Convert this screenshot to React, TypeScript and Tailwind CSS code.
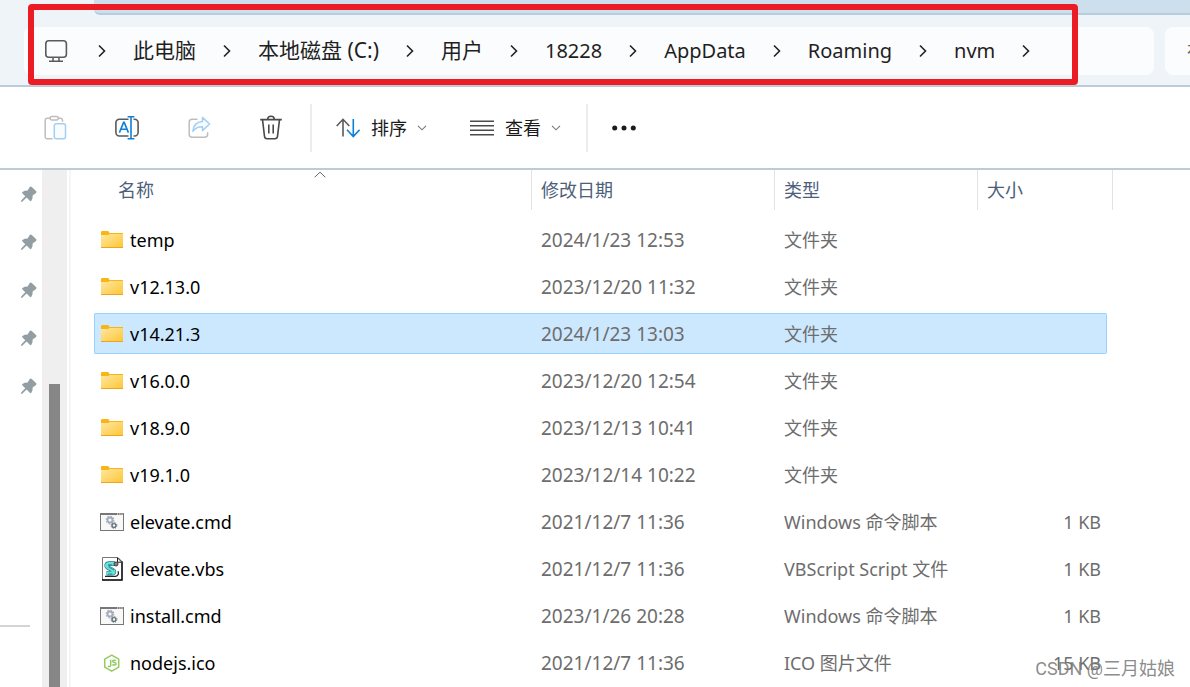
import React from "react";

type FileKind = "folder" | "cmd" | "vbs" | "node";

interface FileEntry {
  name: string;
  date: string;
  type: string;
  size?: string;
  kind: FileKind;
  selected?: boolean;
}

const crumbs = [
  { label: "此电脑", size: "text-[21px]" },
  { label: "本地磁盘 (C:)", size: "text-[21px]" },
  { label: "用户", size: "text-[21px]" },
  { label: "18228", size: "text-[20px]" },
  { label: "AppData", size: "text-[20px]" },
  { label: "Roaming", size: "text-[20px]" },
  { label: "nvm", size: "text-[20px]" },
];

const files: FileEntry[] = [
  { name: "temp", date: "2024/1/23 12:53", type: "文件夹", kind: "folder" },
  { name: "v12.13.0", date: "2023/12/20 11:32", type: "文件夹", kind: "folder" },
  { name: "v14.21.3", date: "2024/1/23 13:03", type: "文件夹", kind: "folder", selected: true },
  { name: "v16.0.0", date: "2023/12/20 12:54", type: "文件夹", kind: "folder" },
  { name: "v18.9.0", date: "2023/12/13 10:41", type: "文件夹", kind: "folder" },
  { name: "v19.1.0", date: "2023/12/14 10:22", type: "文件夹", kind: "folder" },
  { name: "elevate.cmd", date: "2021/12/7 11:36", type: "Windows 命令脚本", size: "1 KB", kind: "cmd" },
  { name: "elevate.vbs", date: "2021/12/7 11:36", type: "VBScript Script 文件", size: "1 KB", kind: "vbs" },
  { name: "install.cmd", date: "2023/1/26 20:28", type: "Windows 命令脚本", size: "1 KB", kind: "cmd" },
  { name: "nodejs.ico", date: "2021/12/7 11:36", type: "ICO 图片文件", size: "15 KB", kind: "node" },
];

function MonitorIcon() {
  return (
    <svg width="28" height="24" viewBox="0 0 28 24" fill="none" stroke="#5a5a5a" strokeWidth="1.6" className="shrink-0">
      <rect x="2.8" y="1.8" width="20.6" height="16.4" rx="3" />
      <path d="M10 18.2v3.6M16 18.2v3.6M6 22.2h14" strokeWidth="1.5" />
    </svg>
  );
}

function CrumbChevron() {
  return (
    <svg width="8" height="14" viewBox="0 0 8 14" fill="none" stroke="#222" strokeWidth="1.6" className="shrink-0">
      <path d="M1 1.5 6.5 7 1 12.5" />
    </svg>
  );
}

function PasteIcon() {
  return (
    <svg width="24" height="26" viewBox="0 0 24 26" fill="none" strokeWidth="1.5">
      <path d="M7.5 3.2H4.2A2 2 0 0 0 2.2 5.2v16.6a2 2 0 0 0 2 2h5.3M15.5 3.2h2a2 2 0 0 1 2 2v1.6" stroke="#bdbdbd" />
      <rect x="7" y="1.5" width="8.4" height="3.4" rx="1.7" stroke="#bdbdbd" />
      <rect x="11.3" y="8.8" width="11.2" height="15" rx="2" stroke="#a3cff2" fill="#f8fcff" />
    </svg>
  );
}

function RenameIcon() {
  return (
    <svg width="24" height="26" viewBox="0 0 24 26" fill="none" strokeWidth="1.6">
      <path d="M13.5 4.2H4.3A3.4 3.4 0 0 0 .9 7.6v10a3.4 3.4 0 0 0 3.4 3.4h9.2M18.5 4.2h1.2a3.4 3.4 0 0 1 3.4 3.4v10a3.4 3.4 0 0 1-3.4 3.4h-1.2" stroke="#5a5a5a" />
      <path d="M4.4 17.6 8.6 7.4h.6l4.2 10.2M5.8 14.3h6.2M12.6 1.8h6.8M12.6 23.8h6.8M16 1.8v22" stroke="#0f7fd8" />
    </svg>
  );
}

function ShareIcon() {
  return (
    <svg width="24" height="26" viewBox="0 0 24 26" fill="none" strokeWidth="1.5" strokeLinejoin="round">
      <path d="M10.5 4.2H5.2a3 3 0 0 0-3 3v12a3 3 0 0 0 3 3h12.4a3 3 0 0 0 3-3v-2" stroke="#bdbdbd" />
      <path d="M15.5 2.4 22.6 9l-7.1 6.6v-3.9c-4-.2-6.9 1-9.6 4.6.4-5.4 3.6-9.4 9.6-9.9z" stroke="#a3cff2" fill="#f8fcff" />
    </svg>
  );
}

function TrashIcon() {
  return (
    <svg width="24" height="26" viewBox="0 0 24 26" fill="none" stroke="#4a4a4a" strokeWidth="1.6">
      <path d="M1.2 4.6h21.6M8.7 4.6a3.3 3.3 0 0 1 6.6 0M3.5 4.6l2 16.8a2.6 2.6 0 0 0 2.6 2.3h7.8a2.6 2.6 0 0 0 2.6-2.3l2-16.8" />
      <path d="M9.8 9.4v9M14.2 9.4v9" />
    </svg>
  );
}

function SortIcon() {
  return (
    <svg width="24" height="24" viewBox="0 0 24 24" fill="none" strokeWidth="1.6">
      <path d="M7 20.5V3.5M.7 10 7 3.3l6.3 6.7" stroke="#5a5a5a" />
      <path d="M17.3 3v17.4M11 13.8l6.3 6.7 6.3-6.7" stroke="#0f7fd8" />
    </svg>
  );
}

function ViewIcon() {
  return (
    <svg width="24" height="24" viewBox="0 0 24 24" fill="none" stroke="#4a4a4a" strokeWidth="1.4">
      <path d="M0 5.2h24M0 9.7h24M0 14.2h24M0 18.7h24" />
    </svg>
  );
}

function DownChevron() {
  return (
    <svg width="10" height="6" viewBox="0 0 10 6" fill="none" stroke="#777" strokeWidth="1.1">
      <path d="m1 .8 4 4 4-4" />
    </svg>
  );
}

function PinIcon() {
  return (
    <svg width="16" height="16" viewBox="0 0 16 16" fill="#929da4">
      <path d="M8.7 1Q9.8.1 10.8.9L15 5.1Q16 6.2 15 7L11.6 9.5Q12.2 12.5 10.3 14.8 9.6 15.5 8.8 14.8L5.6 11.6 1.5 15.6 0 15.9.2 14.4 4.3 10.3 1.2 7.2Q.7 6.4 1.5 5.9 4 4.3 6.7 4.5z" />
    </svg>
  );
}

function FolderIcon() {
  return (
    <svg width="24" height="24" viewBox="0 0 24 24">
      <defs>
        <linearGradient id="folder" x1="0" y1="0" x2="1" y2="1">
          <stop offset="0" stopColor="#ffe7a0" />
          <stop offset="1" stopColor="#fdc637" />
        </linearGradient>
      </defs>
      <path d="M1 4.2Q1 3 2.2 3h5.6q.8 0 1.2 1l.4 1H23v4H1z" fill="#f8b616" />
      <path d="M1 7h7.5l1-1H23v13.5H1z" fill="url(#folder)" />
      <path d="M1 19h22v1H1z" fill="#e8a71d" />
    </svg>
  );
}

function CmdIcon() {
  return (
    <svg width="24" height="24" viewBox="0 0 24 24" fill="none">
      <rect x=".5" y="3.5" width="23" height="17" fill="#f8f8f8" stroke="#777" />
      <path d="M0 4h24" stroke="#777" strokeWidth="2" />
      <path d="M17 4h1.2M19.2 4h1.2M21.4 4h1.2" stroke="#fff" />
      <circle cx="10" cy="10" r="2.5" stroke="#a3adb8" strokeWidth="1.8" />
      <circle cx="10" cy="10" r="3.8" stroke="#a3adb8" strokeWidth="1.2" strokeDasharray="1.5 1.48" />
      <circle cx="14" cy="15.5" r="1.9" stroke="#66737c" strokeWidth="1.4" />
      <circle cx="14" cy="15.5" r="2.9" stroke="#66737c" strokeDasharray="1.2 1.08" />
    </svg>
  );
}

function VbsIcon() {
  return (
    <svg width="24" height="24" viewBox="0 0 24 24" fill="none">
      <path d="M2.5.5H18l4 4V23H2.5z" fill="#fff" stroke="#777" />
      <path d="M22 4.5V23H2" stroke="#111" strokeWidth="1.5" />
      <path d="M17.5.8v4.4h4.3z" fill="#fff" stroke="#222" />
      <path d="M15 6.5H9.2c-3.200 0-3.400 2.900-1 4.200l4.500 2.500c2.200 1.200 1.300 3-.6 3H6.500" stroke="#167b80" strokeWidth="4.4" />
      <path d="M15 6.500H9.200c-3.200 0-3.400 2.900-1 4.200l4.500 2.500c2.200 1.200 1.300 3-.6 3H6.500" stroke="#6fdedb" strokeWidth="3.200" />
      <path d="M8 7.800h4M8.500 10l5.500 3M8 17h4" stroke="#167b80" strokeWidth=".8" />
      <circle cx="16" cy="7" r="2" fill="#888" stroke="#222" strokeWidth=".8" />
      <path d="M5 19.300h10.500c2.800-.6 3.500-2.800 2.500-5" stroke="#1b2c2d" strokeWidth="1.300" />
    </svg>
  );
}

function NodeIcon() {
  return (
    <svg width="24" height="24" viewBox="0 0 24 24" fill="none" stroke="#93cb63" strokeWidth="1.5" strokeLinejoin="round">
      <path d="m11.700 4.200 7 4v8l-7 4-7-4v-8z" />
      <path d="M10.700 8.800v5.700q0 1.500-2.800.700M16 9.700c-1.800-.900-3.400-.500-3.300.700.100 1.500 3.400.7 3.400 2.500 0 1.400-2.300 1.500-3.700.6" />
    </svg>
  );
}

const fileIcons: Record<FileKind, React.ReactNode> = {
  folder: <FolderIcon />,
  cmd: <CmdIcon />,
  vbs: <VbsIcon />,
  node: <NodeIcon />,
};

function AddressBar() {
  return (
    <header className="relative bg-[#eff4f9] border-b-2 border-[#bccbd8] overflow-hidden">
      {/* Tab strip */}
      <div className="ml-[94px] h-[15px] bg-[#cddeec] border-b-2 border-[#b9ccdc] rounded-bl-md" />
      <div className="flex gap-[11px] pl-6 pt-3 pb-[10px]">
        <nav aria-label="地址栏" className="flex-1 min-w-0 h-12 rounded-lg bg-[#fbfcfe] pl-[19px] overflow-hidden">
          <ol className="flex items-center h-full gap-[27px] text-[#1f1f1f] whitespace-nowrap">
            <li className="flex items-center gap-[27px]">
              <MonitorIcon />
              <CrumbChevron />
            </li>
            {crumbs.map((crumb) => (
              <li key={crumb.label} className="flex items-center gap-[27px]">
                <a href="#" className={crumb.size}>
                  {crumb.label}
                </a>
                <CrumbChevron />
              </li>
            ))}
          </ol>
        </nav>
        <div className="w-[25px] h-12 rounded-l-lg bg-[#fbfcfe] overflow-hidden">
          <input
            type="search"
            aria-label="搜索"
            placeholder="在 nvm 中搜索"
            className="w-60 h-full pl-[22px] text-lg bg-transparent outline-none placeholder:text-[#666]"
          />
        </div>
      </div>
      {/* Highlight frame */}
      <div className="absolute left-7 right-28 top-1 bottom-0 border-6 border-[#ec1c24] rounded-sm pointer-events-none" />
    </header>
  );
}

function Toolbar() {
  return (
    <div className="flex items-center h-[83px] pl-[43px] bg-white border-b-2 border-[#bccbd8] text-lg text-[#1a1a1a]">
      <div className="flex items-center gap-12">
        <button aria-label="粘贴"><PasteIcon /></button>
        <button aria-label="重命名"><RenameIcon /></button>
        <button aria-label="共享"><ShareIcon /></button>
        <button aria-label="删除"><TrashIcon /></button>
      </div>
      <div className="w-[2px] h-12 ml-[27px] mr-6 bg-[#ececec]" />
      <div className="flex items-center gap-[43px]">
        <button className="flex items-center">
          <SortIcon />
          <span className="ml-[11px] mr-[10px]">排序</span>
          <DownChevron />
        </button>
        <button className="flex items-center">
          <ViewIcon />
          <span className="ml-[11px] mr-[10px]">查看</span>
          <DownChevron />
        </button>
      </div>
      <div className="w-[2px] h-12 ml-[25px] mr-6 bg-[#ececec]" />
      <button aria-label="更多">
        <svg width="24" height="6" viewBox="0 0 24 6" fill="#1a1a1a">
          <circle cx="2.7" cy="3" r="2.5" />
          <circle cx="12" cy="3" r="2.5" />
          <circle cx="21.3" cy="3" r="2.5" />
        </svg>
      </button>
    </div>
  );
}

function Sidebar() {
  return (
    <aside className="flex shrink-0">
      <div className="w-[42px]">
        {[1, 2, 3, 4, 5].map((n) => (
          <div key={n} className="flex items-center h-12 pl-[21px]">
            <PinIcon />
          </div>
        ))}
        <div className="w-[30px] h-[2px] mt-[215px] bg-[#d4d4d4]" />
      </div>
      <div className="flex w-[25px] bg-[#efefef] pl-[7px]">
        <div className="w-[11px] mt-[214px] bg-[#868686]" />
      </div>
      <div className="w-1 border-r-2 border-[#f5f5f5]" />
    </aside>
  );
}

function FileRow({ file }: { file: FileEntry }) {
  const cell = file.selected
    ? "flex items-center h-[41px] leading-7 bg-[#cce8ff] border-y border-[#99d1ff]"
    : "flex items-center h-[41px] leading-7 border-y border-transparent";

  return (
    <tr className="h-[47px]">
      <td className="p-0">
        <div className={`${cell} border-l rounded-l-xs pl-[5px] gap-[6px] text-black`}>
          {fileIcons[file.kind]}
          {file.name}
        </div>
      </td>
      <td className="p-0">
        <div className={`${cell} pl-[9px] text-[19px]`}>{file.date}</div>
      </td>
      <td className="p-0">
        <div className={`${cell} pl-[9px]`}>{file.type}</div>
      </td>
      <td className="p-0">
        <div className={`${cell} border-r rounded-r-xs justify-end mr-[6px] pr-[5px]`}>{file.size}</div>
      </td>
    </tr>
  );
}

function FileTable() {
  const head = "flex items-center h-10 border-r border-[#e3e3e3]";

  return (
    <main className="flex-1 min-w-0 pl-[23px] pr-[77px]">
      <table className="w-full table-fixed text-lg text-[#6d6d6d] whitespace-nowrap">
        <thead>
          <tr className="h-[46px] text-[#4c607a] align-top">
            <th className="p-0 font-normal">
              <div className={`${head} relative ml-[14px] pl-[10px]`}>
                名称
                <svg width="12" height="7" viewBox="0 0 12 7" fill="none" stroke="#666" className="absolute top-px left-1/2 -translate-x-1/2">
                  <path d="m.7 6.2 5.3-5 5.3 5" />
                </svg>
              </div>
            </th>
            <th className="w-[243px] p-0 font-normal">
              <div className={`${head} pl-[9px]`}>修改日期</div>
            </th>
            <th className="w-[203px] p-0 font-normal">
              <div className={`${head} pl-[9px]`}>类型</div>
            </th>
            <th className="w-[135px] p-0 font-normal">
              <div className={`${head} pl-[9px]`}>大小</div>
            </th>
          </tr>
        </thead>
        <tbody>
          {files.map((file) => (
            <FileRow key={file.name} file={file} />
          ))}
        </tbody>
      </table>
    </main>
  );
}

export default function App() {
  return (
    <div className="relative flex flex-col min-h-screen bg-white font-['Noto_Sans','Noto_Sans_CJK_SC',sans-serif]">
      <AddressBar />
      <Toolbar />
      <div className="flex flex-1">
        <Sidebar />
        <FileTable />
      </div>
      <p className="absolute right-[15px] bottom-1 text-lg text-[#7d7d7d]/90 font-['Roboto','Noto_Sans_CJK_SC',sans-serif]">
        CSDN @三月姑娘
      </p>
    </div>
  );
}
